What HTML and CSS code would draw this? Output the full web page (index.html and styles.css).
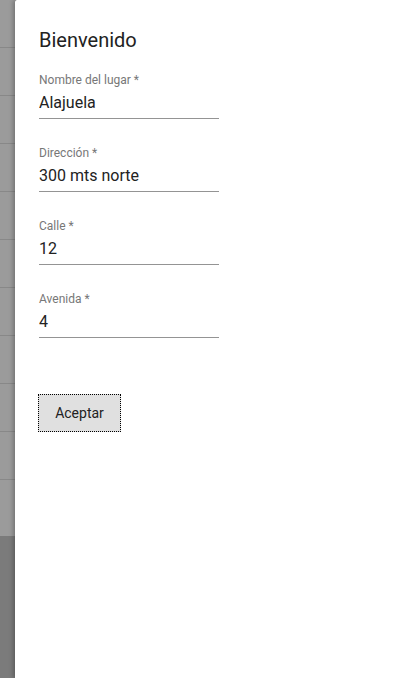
FILE: index.html
```html
<!DOCTYPE html>
<html lang="es">
<head>
<meta charset="utf-8">
<link rel="stylesheet" href="styles.css">
</head>
<body>
<div class="screen">
  <div class="backdrop">
    <div class="rows">
      <div class="row"></div><div class="row"></div><div class="row"></div><div class="row"></div><div class="row"></div>
      <div class="row"></div><div class="row"></div><div class="row"></div><div class="row"></div><div class="row"></div>
    </div>
    <div class="below"></div>
  </div>
  <div class="panel">
    <h1 class="title">Bienvenido</h1>
    <form class="form">
      <label class="field">
        <span class="label">Nombre del lugar *</span>
        <input class="input" type="text" value="Alajuela">
      </label>
      <label class="field">
        <span class="label">Dirección *</span>
        <input class="input" type="text" value="300 mts norte">
      </label>
      <label class="field">
        <span class="label">Calle *</span>
        <input class="input" type="text" value="12">
      </label>
      <label class="field">
        <span class="label">Avenida *</span>
        <input class="input" type="text" value="4">
      </label>
      <div class="actions">
        <button class="btn" type="button">Aceptar</button>
      </div>
    </form>
  </div>
</div>
</body>
</html>
```
FILE: styles.css
```css
* { box-sizing: border-box; }
html, body { margin: 0; padding: 0; height: 100%; }
body { font-family: Roboto, "Noto Sans", sans-serif; background: #7b7b7b; }
.screen { display: flex; height: 678px; overflow: hidden; }
.backdrop { width: 15px; flex: none; display: flex; flex-direction: column; }
.rows { background: #9b9b9b; height: 536px; display: flex; flex-direction: column; }
.row { height: 48px; border-bottom: 1px solid #888; flex: none; }
.below { flex: 1; background: #7b7b7b; }
.panel {
  flex: 1;
  background: #fff;
  border-radius: 2px 0 0 0;
  box-shadow: -2px 0 4px rgba(0,0,0,0.25);
  padding: 24px 24px;
  position: relative;
}
.title { margin: 0; font-size: 20px; font-weight: 400; line-height: 32px; color: #222; }
.form { display: flex; flex-direction: column; margin-top: 16px; }
.field { display: flex; flex-direction: column; width: 180px; margin-bottom: 26px; }
.label { font-size: 12px; line-height: 16px; color: #777; }
.input {
  font-family: inherit; font-size: 16px; color: #222;
  border: 0; border-bottom: 1px solid #949494;
  padding: 4px 0 6px; margin: 0; outline: none; background: transparent;
  line-height: 20px; height: 31px;
}
.actions { margin-top: 30px; }
.btn {
  font-family: inherit; font-size: 14px; color: #222;
  background: #e0e0e0; border: 1px dotted #000; border-radius: 0;
  width: 83px; height: 38px; padding: 0; margin-left: -1px;
}
```
